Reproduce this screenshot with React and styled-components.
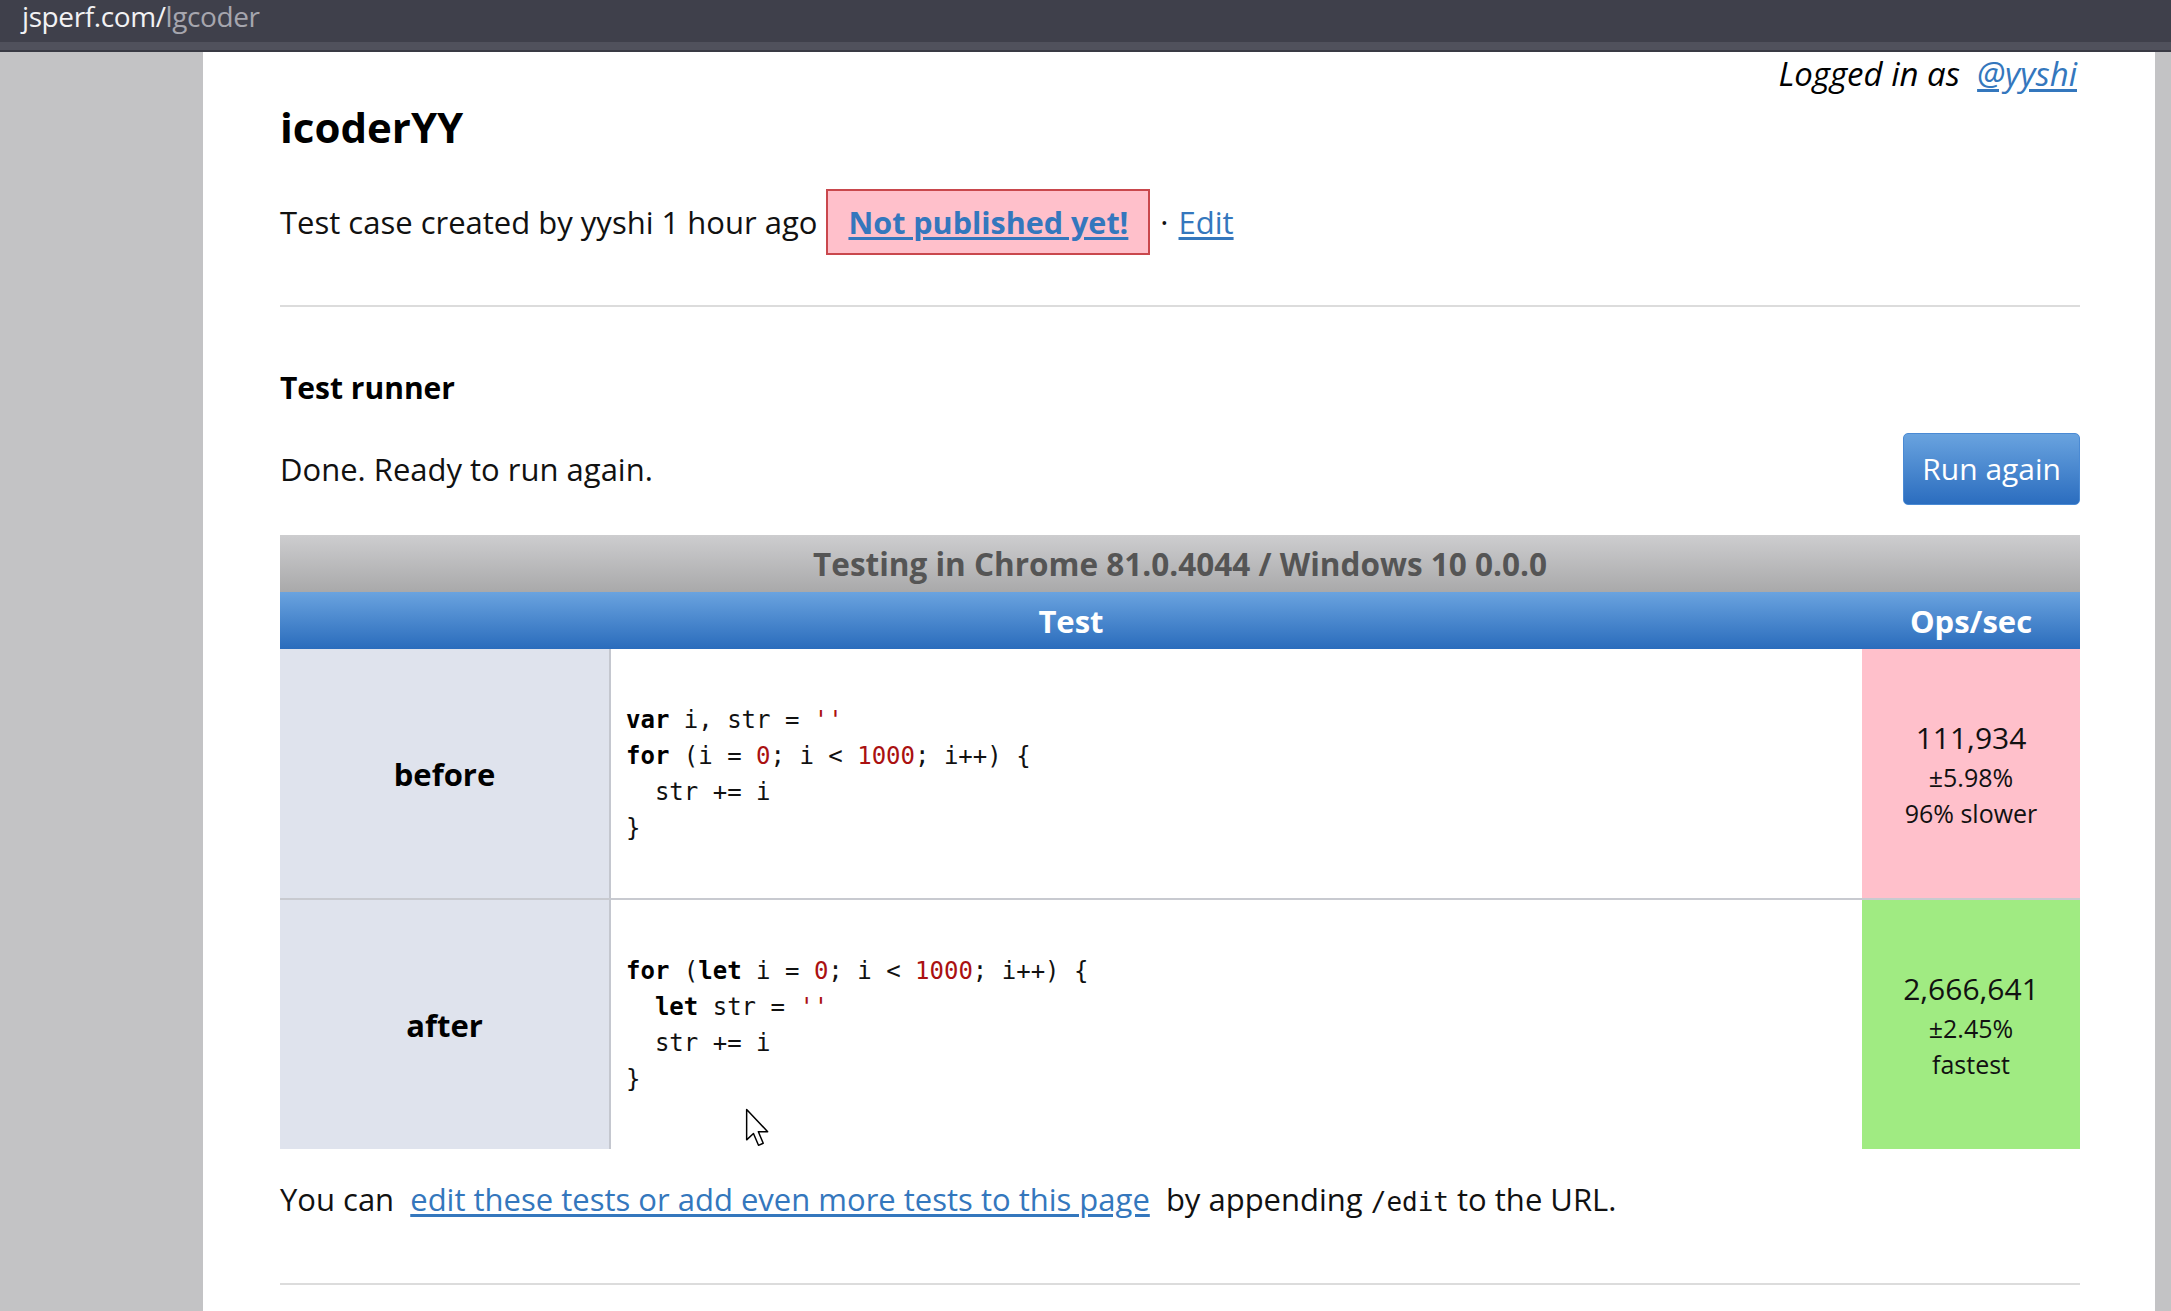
import styled, { createGlobalStyle } from 'styled-components'

const GlobalStyle = createGlobalStyle`
  html, body {
    margin: 0;
    padding: 0;
  }
  body {
    background: #c3c3c5;
    font-family: "Open Sans", "Noto Sans", sans-serif;
    color: #111;
  }
`

const TopBar = styled.div`
  height: 42px;
  background: #3f404b;
  padding-left: 22px;
  font-size: 28px;
  line-height: 32px;
  letter-spacing: -0.4px;
  color: #f2f2f4;
`

const Host = styled.span`
  color: #a6a6ae;
`

const BarEdge = styled.div`
  height: 10px;
  background: linear-gradient(#50515c 0, #50515c 75%, #393a44 75%);
`

const Sheet = styled.main`
  position: relative;
  box-sizing: border-box;
  margin-left: 203px;
  width: 1952px;
  min-height: 1259px;
  background: #fff;
  padding: 3px 75px 0 77px;
`

const LoggedIn = styled.div`
  text-align: right;
  font-style: italic;
  font-size: 33px;
  line-height: 38px;
  padding-right: 3px;
  color: #000;
`

const Link = styled.a`
  color: #3477bd;
  text-decoration: underline;
  text-underline-offset: 3px;
  cursor: pointer;
`

const Title = styled.h1`
  margin: 7px 0 0;
  font-size: 42px;
  line-height: 53px;
  font-weight: 700;
  color: #000;
`

const MetaRow = styled.div`
  margin-top: 36px;
  display: flex;
  align-items: center;
  gap: 9px;
  font-size: 31px;
  line-height: 42px;
`

const Badge = styled.span`
  background: #ffc0cb;
  border: 2px solid #c9484d;
  padding: 10px 20px;
  font-size: 30.5px;
  font-weight: 700;
`

const Dot = styled.span`
  padding: 0 1px;
`

const Rule = styled.hr`
  margin: ${(p) => p.$top}px 0 0;
  height: 2px;
  border: none;
  background: #dcdcdc;
`

const SubTitle = styled.h2`
  margin: 60px 0 0;
  font-size: 30px;
  line-height: 42px;
  font-weight: 700;
  color: #000;
`

const RunnerRow = styled.div`
  margin-top: 24px;
  display: flex;
  justify-content: space-between;
  align-items: center;
  font-size: 31px;
  line-height: 42px;
`

const RunButton = styled.button`
  font-family: inherit;
  font-size: 30px;
  line-height: 42px;
  color: #fff;
  padding: 14px 18px;
  border: 1px solid #4a8ad4;
  border-radius: 5px;
  background: linear-gradient(#69a3df, #2b6dbf);
  cursor: pointer;
`

const Table = styled.table`
  margin-top: 30px;
  width: 100%;
  border-collapse: separate;
  border-spacing: 0;
  table-layout: fixed;
  font-size: 31px;
  line-height: 42px;
`

const CaptionCell = styled.th`
  height: 57px;
  padding: 0;
  background: linear-gradient(#cdcdcf, #a9a9aa);
  color: #555;
  font-size: 31.5px;
  font-weight: 700;
  text-align: center;
`

const HeadCell = styled.th`
  height: 57px;
  padding: 0;
  background: linear-gradient(#6aa3df, #2a6cbc);
  color: #fff;
  font-weight: 700;
  text-align: center;
`

const LabelCell = styled.th`
  height: 249px;
  padding: 0;
  background: #dfe3ed;
  border-right: 2px solid #c4c7cf;
  border-top: ${(p) => (p.$first ? 'none' : '2px solid #c8cad0')};
  font-weight: 700;
  text-align: center;
  color: #000;
`

const CodeCell = styled.td`
  padding: 0 0 0 15px;
  background: #fff;
  border-top: ${(p) => (p.$first ? 'none' : '2px solid #c8cad0')};
  vertical-align: middle;
`

const OpsCell = styled.td`
  padding: 0;
  background: ${(p) => p.$bg};
  border-top: ${(p) => (p.$first ? 'none' : '2px solid #c8cad0')};
  text-align: center;
  vertical-align: middle;
  color: #111;
`

const OpsNumber = styled.div`
  font-size: 30px;
  line-height: 42px;
`

const OpsSmall = styled.div`
  font-size: 25px;
  line-height: 36px;
`

const Code = styled.pre`
  margin: 0;
  font-family: "DejaVu Sans Mono", "Liberation Mono", monospace;
  font-size: 24px;
  line-height: 36px;
  color: #111;
`

const Kw = styled.b`
  font-weight: 700;
  color: #000;
`

const Lit = styled.span`
  color: #a11;
`

const Footer = styled.p`
  margin: 29px 0 0;
  font-size: 31px;
  line-height: 42px;
`

const Mono = styled.code`
  font-family: "DejaVu Sans Mono", "Liberation Mono", monospace;
  font-size: 26px;
`

const Pointer = styled.svg`
  position: absolute;
  left: 542px;
  top: 1056px;
  width: 27px;
  height: 40px;
`

const tests = [
  {
    name: 'before',
    ops: '111,934',
    rme: '±5.98%',
    note: '96% slower',
    bg: '#ffc0cb',
    code: (
      <>
        <Kw>var</Kw> i, str = <Lit>''</Lit>
        {'\n'}
        <Kw>for</Kw> (i = <Lit>0</Lit>; i &lt; <Lit>1000</Lit>; i++) {'{'}
        {'\n'}  str += i{'\n'}
        {'}'}
      </>
    ),
  },
  {
    name: 'after',
    ops: '2,666,641',
    rme: '±2.45%',
    note: 'fastest',
    bg: '#a0eb82',
    code: (
      <>
        <Kw>for</Kw> (<Kw>let</Kw> i = <Lit>0</Lit>; i &lt; <Lit>1000</Lit>; i++) {'{'}
        {'\n'}  <Kw>let</Kw> str = <Lit>''</Lit>
        {'\n'}  str += i{'\n'}
        {'}'}
      </>
    ),
  },
]

export default function App() {
  return (
    <>
      <GlobalStyle />
      <TopBar>
        jsperf.com/<Host>lgcoder</Host>
      </TopBar>
      <BarEdge />
      <Sheet>
        <LoggedIn>
          Logged in as&nbsp; <Link>@yyshi</Link>
        </LoggedIn>
        <Title>icoderYY</Title>
        <MetaRow>
          <span>Test case created by yyshi 1 hour ago</span>
          <Badge>
            <Link>Not published yet!</Link>
          </Badge>
          <Dot>·</Dot>
          <Link>Edit</Link>
        </MetaRow>
        <Rule $top={50} />
        <SubTitle>Test runner</SubTitle>
        <RunnerRow>
          <span>Done. Ready to run again.</span>
          <RunButton>Run again</RunButton>
        </RunnerRow>
        <Table>
          <colgroup>
            <col style={{ width: 331 }} />
            <col />
            <col style={{ width: 218 }} />
          </colgroup>
          <thead>
            <tr>
              <CaptionCell colSpan={3}>Testing in Chrome 81.0.4044 / Windows 10 0.0.0</CaptionCell>
            </tr>
            <tr>
              <HeadCell colSpan={2}>Test</HeadCell>
              <HeadCell>Ops/sec</HeadCell>
            </tr>
          </thead>
          <tbody>
            {tests.map((t, i) => (
              <tr key={t.name}>
                <LabelCell $first={i === 0}>{t.name}</LabelCell>
                <CodeCell $first={i === 0}>
                  <Code>{t.code}</Code>
                </CodeCell>
                <OpsCell $first={i === 0} $bg={t.bg}>
                  <OpsNumber>{t.ops}</OpsNumber>
                  <OpsSmall>{t.rme}</OpsSmall>
                  <OpsSmall>{t.note}</OpsSmall>
                </OpsCell>
              </tr>
            ))}
          </tbody>
        </Table>
        <Footer>
          You can&nbsp; <Link>edit these tests or add even more tests to this page</Link>&nbsp; by appending{' '}
          <Mono>/edit</Mono> to the URL.
        </Footer>
        <Rule $top={60} />
        <Pointer viewBox="0 0 18 27">
          <path
            d="M1 1 L1 21.5 L5.6 17.2 L9 25.2 L12.2 23.8 L8.9 16 L15.2 16 Z"
            fill="#fff"
            stroke="#000"
            strokeWidth="1"
            strokeLinejoin="round"
          />
        </Pointer>
      </Sheet>
    </>
  )
}
